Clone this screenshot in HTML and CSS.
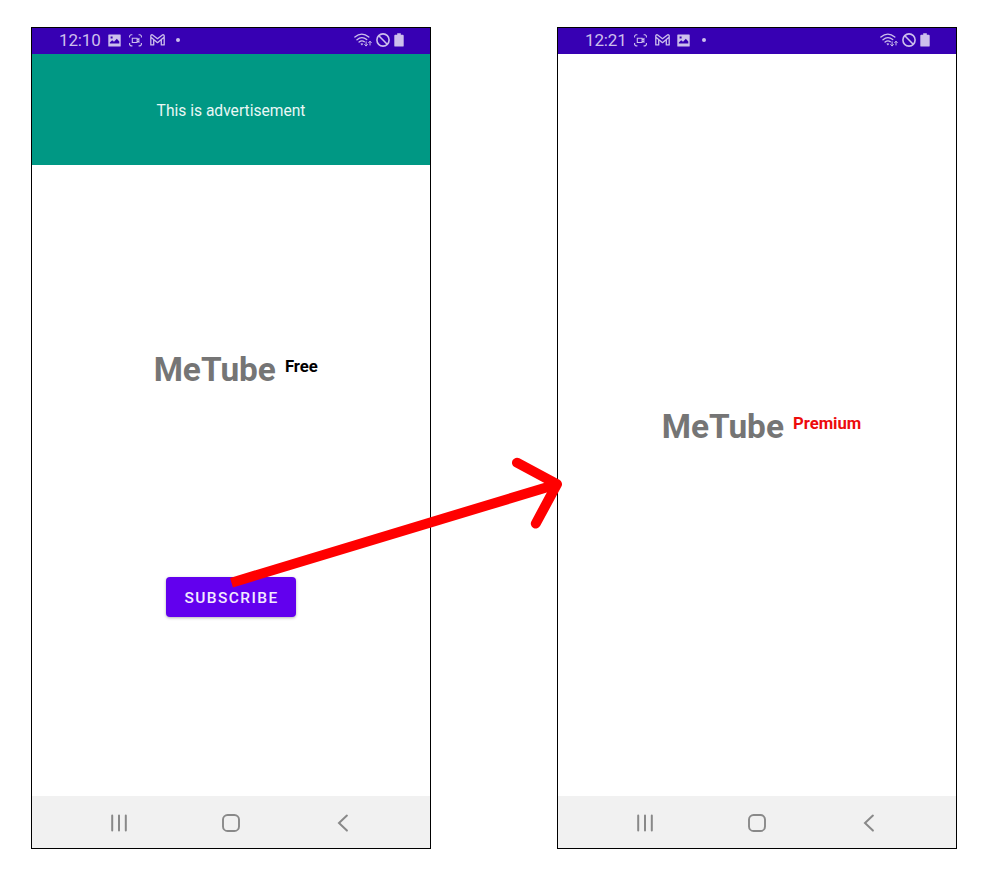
FILE: index.html
```html
<!DOCTYPE html>
<html lang="en">
<head>
<meta charset="utf-8">
<title>MeTube</title>
<link rel="stylesheet" href="styles.css">
</head>
<body>
<svg class="defs" width="0" height="0" aria-hidden="true">
  <symbol id="picture" viewBox="0 0 13 13"><path fill-rule="evenodd" fill="currentColor" d="M.9.4h11.2a.6.6 0 0 1 .6.6v10.9a.6.6 0 0 1-.6.6H.9a.6.6 0 0 1-.6-.6V1A.6.6 0 0 1 .9.4ZM1.8 9.6h9.5V7.5L8.8 4.7 6 7.8 4.2 6.3 1.8 8.5ZM2.6 2.5v2h2v-2Z"/></symbol>
  <symbol id="record" viewBox="0 0 13 13"><g fill="none" stroke="currentColor" stroke-width="1.1"><path d="M.6 3.6V1.9L1.9.7h1.5M9.6.7h1.5l1.3 1.2v1.7M.6 9v1.7l1.3 1.2h1.5M9.6 11.9h1.5l1.3-1.2V9"/><path d="M3.3 4.3h4.8v4.2H3.3ZM8.1 5.8l1.8-1v3.3l-1.8-1"/></g></symbol>
  <symbol id="mail" viewBox="0 0 15 12"><path fill="none" stroke="currentColor" stroke-width="1.3" stroke-linejoin="round" d="M.8 10.9V2Q.9.5 2.3.8L7.5 4.8 12.7.8Q14.1.5 14.2 2v8.9h-2.9V5.6L7.5 8.7 3.7 5.6v5.3ZM3.7 5.6.9 3.2M11.3 5.6l2.8-2.4"/></symbol>
  <symbol id="wifi" viewBox="0 0 18 14"><g fill="none" stroke="currentColor" stroke-width="1.35" stroke-linecap="round"><path d="M.9 4.1Q7.8-1.8 14.8 4.1M3 6.7Q7.8 2.6 12.7 6.5M5.1 9.1Q7.8 6.8 10.3 8.7"/><path stroke-width="1" d="M12.1 8.8v4M10.7 11.6l1.4 1.4 1.3-1.4M16 12V8.4M14.7 9.6 16 8.3l1.3 1.3"/></g><path fill="currentColor" d="m6.4 10.7 1.5 1.7 1.4-1.7Q7.8 9.8 6.4 10.7Z"/></symbol>
  <symbol id="blocked" viewBox="0 0 14 14"><g fill="none" stroke="currentColor" stroke-width="1.6"><circle cx="7" cy="7" r="6.1"/><path d="m2.8 2.8 8.4 8.4"/></g></symbol>
  <symbol id="battery" viewBox="0 0 10 14"><path fill="currentColor" d="M3.2.2h3.6v1.6h2q.9 0 .9.9v10q0 .9-.9.9H1.2q-.9 0-.9-.9v-10q0-.9.9-.9h2Z"/></symbol>
  <symbol id="recents" viewBox="0 0 18 18"><path fill="none" stroke="currentColor" stroke-width="2" stroke-linecap="round" d="M2.2 1.6v15M9 1.6v15M15.8 1.6v15"/></symbol>
  <symbol id="home" viewBox="0 0 18 18"><rect x="1" y="1" width="16" height="16" rx="4.6" fill="none" stroke="currentColor" stroke-width="1.9"/></symbol>
  <symbol id="back" viewBox="0 0 18 18"><path fill="none" stroke="currentColor" stroke-width="2" stroke-linecap="round" d="m12.9 1.6-7.9 7.5 7.9 7.5"/></symbol>
</svg>

<main class="screens">
  <section class="phone">
    <header class="status">
      <span class="clock">12:10</span>
      <svg class="picture"><use href="#picture"/></svg>
      <svg class="record"><use href="#record"/></svg>
      <svg class="mail"><use href="#mail"/></svg>
      <span class="dot"></span>
      <div class="system">
        <svg class="wifi"><use href="#wifi"/></svg>
        <svg class="blocked"><use href="#blocked"/></svg>
        <svg class="battery"><use href="#battery"/></svg>
      </div>
    </header>
    <div class="ad">This is advertisement</div>
    <div class="content free">
      <h1 class="brand">MeTube<span class="plan">Free</span></h1>
      <button class="subscribe" type="button">SUBSCRIBE</button>
    </div>
    <nav class="nav">
      <svg><use href="#recents"/></svg>
      <svg><use href="#home"/></svg>
      <svg><use href="#back"/></svg>
    </nav>
  </section>

  <section class="phone">
    <header class="status">
      <span class="clock">12:21</span>
      <svg class="record"><use href="#record"/></svg>
      <svg class="mail"><use href="#mail"/></svg>
      <svg class="picture"><use href="#picture"/></svg>
      <span class="dot"></span>
      <div class="system">
        <svg class="wifi"><use href="#wifi"/></svg>
        <svg class="blocked"><use href="#blocked"/></svg>
        <svg class="battery"><use href="#battery"/></svg>
      </div>
    </header>
    <div class="content premium">
      <h1 class="brand">MeTube<span class="plan">Premium</span></h1>
    </div>
    <nav class="nav">
      <svg><use href="#recents"/></svg>
      <svg><use href="#home"/></svg>
      <svg><use href="#back"/></svg>
    </nav>
  </section>
</main>

<svg class="arrow" viewBox="0 0 983 872" aria-hidden="true">
  <path d="M231.5 582.7 557 484.2"/>
  <path class="head" d="M517 462.7 557 484.2 535.8 523.5"/>
</svg>
</body>
</html>
```

FILE: styles.css
```css
* { box-sizing: border-box; }

body {
  margin: 0;
  background: #fff;
  font-family: Roboto, "Liberation Sans", sans-serif;
  position: relative;
  width: 983px;
  height: 872px;
  overflow: hidden;
}

svg { display: block; flex: none; }
.defs { position: absolute; }

.screens {
  display: flex;
  gap: 126px;
  padding: 27px 0 0 31px;
}

.phone {
  display: flex;
  flex-direction: column;
  width: 400px;
  height: 822px;
  border: 1px solid #000;
  background: #fff;
}

.status {
  display: flex;
  align-items: center;
  gap: 8px;
  height: 25.5px;
  padding: 0 26.5px 1px 27px;
  background: #3700b3;
  color: #cdbfec;
  flex: none;
}

.clock {
  width: 41px;
  font-size: 17px;
  line-height: 24px;
  letter-spacing: -.15px;
  white-space: nowrap;
}

.picture { width: 13px; height: 13px; }
.record { width: 13px; height: 13px; }
.mail { width: 15px; height: 12px; margin: 0 -.5px; }

.dot {
  width: 4px;
  height: 4px;
  margin-left: 4px;
  border-radius: 50%;
  background: currentColor;
}

.system {
  display: flex;
  align-items: center;
  gap: 4px;
  margin-left: auto;
}

.wifi { width: 18px; height: 14px; }
.blocked { width: 14px; height: 14px; }
.battery { width: 10px; height: 14px; }

.ad {
  display: flex;
  align-items: center;
  justify-content: center;
  height: 111.2px;
  padding-top: 3px;
  background: #009884;
  color: #e9f7f5;
  font-size: 15.6px;
  flex: none;
}

.content {
  display: flex;
  flex-direction: column;
  align-items: center;
  flex: 1;
}

.free { padding-top: 185px; }
.premium { padding-top: 353px; }

.brand {
  display: flex;
  align-items: flex-start;
  margin: 0;
  color: #757575;
  font-size: 33.4px;
  line-height: 40px;
  font-weight: 700;
}

.free .brand { padding-left: 9.5px; }
.premium .brand { padding-left: 9px; }

.plan {
  margin-left: 9px;
  font-size: 16.7px;
  line-height: 34px;
  color: #000;
}

.premium .plan { color: #ed0c0c; }

.subscribe {
  width: 130px;
  height: 40px;
  margin-top: 187px;
  padding: 2px 0 0 1px;
  border: 0;
  border-radius: 4px;
  background: #6200ee;
  color: #f3eaff;
  font: 500 15.5px/38px Roboto, "Liberation Sans", sans-serif;
  letter-spacing: 1.4px;
  box-shadow: 0 1px 3px rgba(0, 0, 0, .3);
}

.nav {
  display: flex;
  justify-content: center;
  align-items: center;
  gap: 94px;
  height: 52px;
  padding-top: 2px;
  background: #f1f1f1;
  color: #898989;
  flex: none;
}

.nav svg { width: 18px; height: 18px; }

.arrow {
  position: absolute;
  inset: 0;
  width: 983px;
  height: 872px;
  fill: none;
  stroke: #f00;
  stroke-width: 10;
  pointer-events: none;
}

.head {
  stroke-linecap: round;
  stroke-linejoin: round;
}
```
